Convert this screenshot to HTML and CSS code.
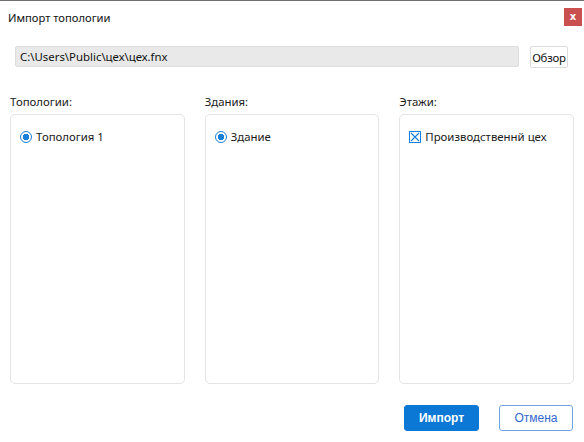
FILE: index.html
```html
<!DOCTYPE html>
<html lang="ru">
<head>
<meta charset="utf-8">
<title>Импорт топологии</title>
<link rel="stylesheet" href="styles.css">
</head>
<body>
<div class="window">
  <header class="titlebar">
    <span class="title">Импорт топологии</span>
    <button class="close" type="button">x</button>
  </header>
  <div class="path-row">
    <div class="path-field">C:\Users\Public\цех\цех.fnx</div>
    <button class="browse" type="button">Обзор</button>
  </div>
  <div class="columns">
    <section class="col">
      <div class="col-label">Топологии:</div>
      <div class="panel">
        <div class="item"><span class="radio"></span><span>Топология 1</span></div>
      </div>
    </section>
    <section class="col">
      <div class="col-label">Здания:</div>
      <div class="panel">
        <div class="item"><span class="radio"></span><span>Здание</span></div>
      </div>
    </section>
    <section class="col">
      <div class="col-label">Этажи:</div>
      <div class="panel">
        <div class="item"><span class="check"><svg width="10" height="10" viewBox="0 0 10 10"><path d="M1 1 L9 9 M9 1 L1 9" stroke="#1a7fd8" stroke-width="1.1" fill="none"/></svg></span><span>Производственнй цех</span></div>
      </div>
    </section>
  </div>
  <footer class="footer">
    <button class="btn primary" type="button">Импорт</button>
    <button class="btn secondary" type="button">Отмена</button>
  </footer>
</div>
</body>
</html>
```

FILE: styles.css
```css
* { box-sizing: border-box; }
html, body { margin: 0; padding: 0; background: #ffffff; }
body {
  font-family: "Noto Sans", "Open Sans", sans-serif;
  font-size: 11.4px;
  color: #1a1a1a;
  width: 584px;
  height: 442px;
  overflow: hidden;
}
.window {
  border-top: 1px solid #707070;
  height: 442px;
  display: flex;
  flex-direction: column;
}
.titlebar {
  height: 32px;
  display: flex;
  align-items: center;
  justify-content: space-between;
  padding: 0 2px 0 8px;
}
.title { font-size: 11.2px; color: #111; }
.close {
  width: 18px;
  height: 18px;
  border: none;
  padding: 0;
  background: #c9504f;
  color: #fff;
  font-family: "DejaVu Sans", sans-serif;
  font-weight: bold;
  font-size: 10px;
  line-height: 18px;
  text-align: center;
}
.path-row {
  margin-top: 13px;
  display: flex;
  gap: 11px;
  padding: 0 16px 0 15px;
  height: 22px;
}
.path-field {
  flex: 1;
  height: 21px;
  background: #e8e9e8;
  border: 1px solid #dedede;
  border-radius: 2px;
  padding: 0 4px;
  line-height: 19px;
  color: #111;
}
.browse {
  width: 38px;
  height: 22px;
  padding: 0;
  background: #ffffff;
  border: 1px solid #dcdcdc;
  border-radius: 2px;
  font-family: inherit;
  font-size: 11.4px;
  color: #111;
  letter-spacing: -0.2px;
}
.columns {
  margin-top: 26px;
  display: grid;
  grid-template-columns: 1fr 1fr 1fr;
  gap: 20px;
  padding: 0 10px;
}
.col-label { height: 16px; line-height: 16px; margin-bottom: 4px; }
.panel {
  height: 270px;
  border: 1px solid #e4e4e4;
  border-radius: 5px;
  padding: 14px 9px;
}
.item {
  display: flex;
  align-items: center;
  gap: 4px;
  height: 16px;
  line-height: 16px;
}
.radio {
  width: 12px;
  height: 12px;
  border-radius: 50%;
  border: 1.5px solid #1a7fd8;
  background: radial-gradient(circle, #1a7fd8 0 3px, #ffffff 3.5px);
  flex: none;
}
.check {
  width: 12px;
  height: 12px;
  border: 1px solid #1a7fd8;
  background: #fff;
  display: flex;
  align-items: center;
  justify-content: center;
  flex: none;
}
.footer {
  margin-top: 21px;
  display: flex;
  justify-content: flex-end;
  gap: 20px;
  padding-right: 11px;
}
.btn {
  height: 26px;
  border-radius: 3px;
  font-family: "Liberation Sans", Arial, sans-serif;
  font-size: 12px;
  padding: 0;
}
.primary {
  width: 75px;
  background: #0b78d6;
  border: 1px solid #0b78d6;
  color: #fff;
  font-weight: bold;
}
.secondary {
  width: 74px;
  background: #fff;
  border: 1px solid #6fa6e2;
  color: #3567d0;
}
```
